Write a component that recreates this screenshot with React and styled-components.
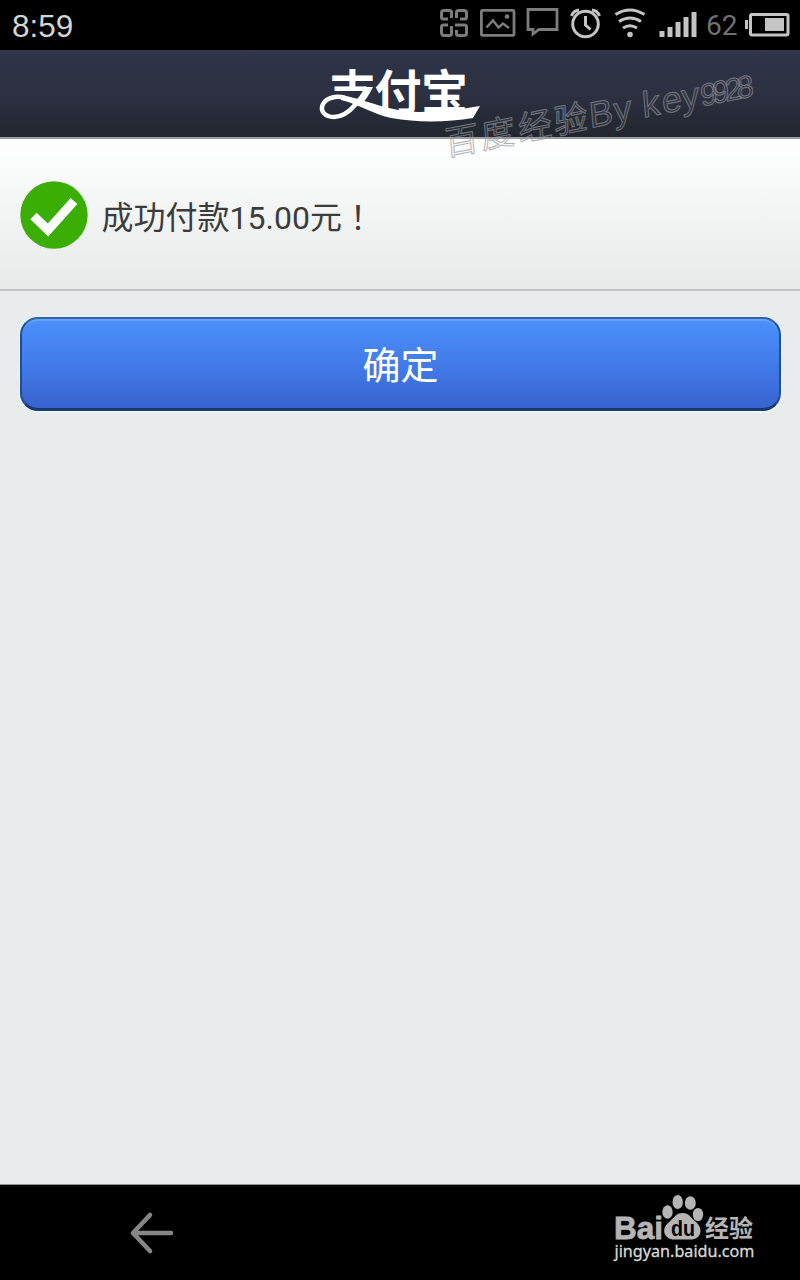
import React from 'react';
import styled, { createGlobalStyle } from 'styled-components';

const GlobalStyle = createGlobalStyle`
    * {
        box-sizing: border-box;
    }

    body {
        margin: 0;
        background-color: #e8ecec;
        font-family: Roboto, 'Noto Sans CJK SC', sans-serif;
    }
`;

// Styled components
const Screen = styled.div`
    width: 100%;
    height: 1280px;
    display: flex;
    flex-direction: column;
    background-color: #e8ecec;
    overflow: hidden;
`;

const StatusBar = styled.div`
    height: 50px;
    padding: 0 10px 0 12px;
    display: flex;
    justify-content: space-between;
    background-color: #000;
`;

const Clock = styled.div`
    padding-top: 1px;
    font-family: 'Liberation Sans', sans-serif;
    font-size: 31.5px;
    line-height: 50px;
    color: #d4d4d4;
`;

const StatusIcons = styled.div`
    display: flex;
    align-items: flex-start;
    padding-top: 6px;
`;

const StatusIcon = styled.svg`
    display: block;
    width: ${(props) => props.$width}px;
    height: 34px;
    margin-right: ${(props) => props.$gap || 0}px;
    color: ${(props) => (props.$bright ? '#c4c4c4' : '#7c7c7c')};
    fill: none;
    stroke: currentColor;
`;

const BatteryLevel = styled.div`
    width: 32px;
    margin-right: 7px;
    font-size: 28px;
    line-height: 39px;
    color: #707070;
`;

const Header = styled.header`
    position: relative;
    height: 89px;
    display: flex;
    justify-content: center;
    background: linear-gradient(#353a4c 0, #2f3348 6px, #2c3041 50%, #22262f 100%);
    border-bottom: 2px solid #9b9da2;
`;

const LogoMark = styled.svg`
    display: block;
    width: 164px;
    height: 60px;
    margin-top: 14px;
    overflow: visible;
    fill: #fff;
    font-family: 'Noto Sans CJK SC', sans-serif;
    font-size: 47px;
    font-weight: 700;
`;

const Watermark = styled.svg`
    position: absolute;
    top: 10px;
    left: 430px;
    width: 350px;
    height: 110px;
    overflow: visible;
    fill: rgba(190, 190, 190, 0.08);
    stroke: rgba(145, 147, 152, 0.7);
    stroke-width: 1;
    font-family: 'Liberation Sans', 'Noto Sans CJK SC', sans-serif;
    font-size: 34px;
    pointer-events: none;
`;

const Result = styled.section`
    height: 152px;
    padding: 2px 19.5px 0;
    display: flex;
    align-items: center;
    gap: 14px;
    background: linear-gradient(#fff 0%, #fbfcfc 15%, #e9eceb 90%, #e7ebea 100%);
    border-bottom: 2px solid #bfc3c2;
`;

const CheckIcon = styled.svg`
    display: block;
    width: 68px;
    height: 68px;
`;

const ResultText = styled.p`
    margin: 2px 0 0;
    font-size: 32px;
    line-height: 40px;
    color: #3c3c3c;
`;

// full-width punctuation that sits in the middle of its cell
const Mark = styled.span`
    font-family: 'Noto Sans CJK TC', sans-serif;
`;

const Actions = styled.main`
    flex: 1;
    padding: 26px 19px 0 20px;
`;

const ConfirmButton = styled.button`
    display: block;
    width: 100%;
    height: 94px;
    padding: 0 0 2px;
    border: 2px solid #1d4f93;
    border-top-color: #2c64ae;
    border-bottom: 3px solid #153b74;
    border-radius: 18px;
    background: linear-gradient(#4b90fb 0%, #427ce9 50%, #3962cf 100%);
    box-shadow: inset 0 3px 1px -1px #6ba5f5, 0 1px 2px #f8ffff;
    font-family: 'Noto Sans CJK SC', sans-serif;
    font-size: 38px;
    color: #fff;
`;

const NavBar = styled.nav`
    height: 96px;
    padding: 0 43px 0 128px;
    display: flex;
    justify-content: space-between;
    background-color: #000;
    border-top: 1px solid #8c8f8f;
`;

const BackIcon = styled.svg`
    display: block;
    width: 48px;
    height: 48px;
    margin-top: 24px;
    fill: none;
    stroke: #868686;
    stroke-width: 4.6;
    stroke-linecap: round;
    stroke-linejoin: round;
`;

const BaiduMark = styled.svg`
    display: block;
    width: 146px;
    height: 72px;
    margin-top: 7px;
    overflow: visible;
    fill: #b5b5b5;
    font-family: 'Liberation Sans', 'Noto Sans CJK SC', sans-serif;
    font-weight: 700;
`;

function StatusArea() {
    return (
        <StatusBar>
            <Clock>8:59</Clock>
            <StatusIcons>
                <StatusIcon $width={30} $gap={11} viewBox="0 0 30 34" strokeWidth="3">
                    <path d="M9 13H4.5Q2.5 13 2.5 11V7Q2.5 4.5 5 4.5H10.5Q12.5 4.5 12.5 6.5V12" />
                    <path d="M21 13H25.5Q27.5 13 27.5 11V7Q27.5 4.5 25 4.5H19.5Q17.5 4.5 17.5 6.5V12" />
                    <path d="M9 19H4.5Q2.5 19 2.5 21V26Q2.5 29.5 5 29.5H10.5Q12.5 29.5 12.5 27.5V20" />
                    <path d="M16 19H25.5Q27.5 19 27.5 21V27.5Q27.5 29.5 25 29.5H19.5Q17.5 29.5 17.5 27.5V24" />
                </StatusIcon>
                <StatusIcon $width={36} $gap={10} viewBox="0 0 36 34" strokeWidth="2.8">
                    <rect x="1.4" y="4.4" width="32.6" height="25" rx="1" />
                    <path d="M6.5 21.5L13 14.5L18.5 21.5L23 17.5L29 22" strokeWidth="2.5" />
                    <circle cx="27" cy="10.5" r="2.3" fill="currentColor" stroke="none" />
                </StatusIcon>
                <StatusIcon $width={34} $gap={10} viewBox="0 0 34 34" strokeWidth="2.8">
                    <path d="M2 3.5H31V23.5H13L7 28V23.5H2Z" />
                </StatusIcon>
                <StatusIcon $width={32} $gap={12} $bright viewBox="0 0 32 34" strokeWidth="3">
                    <circle cx="15.5" cy="18" r="12.8" />
                    <path d="M15.5 10V19L20.5 23.5" />
                    <path d="M1.5 10Q3.5 4.5 9 4M29.5 10Q27.5 4.5 22 4" />
                </StatusIcon>
                <StatusIcon $width={32} $gap={13} $bright viewBox="0 0 32 34" strokeWidth="3">
                    <path d="M1.5 8.5Q16 -.5 30.5 8.5M5 15.5Q16 8.5 27 15.5M9 22Q16 17.5 23 22" />
                    <circle cx="16" cy="28.5" r="2.8" fill="currentColor" stroke="none" />
                </StatusIcon>
                <StatusIcon $width={38} $gap={9} $bright viewBox="0 0 38 34" strokeWidth="5">
                    <path d="M3 31V25M11 31V21M19 31V16M27 31V11M35 31V6" />
                </StatusIcon>
                <BatteryLevel>62</BatteryLevel>
                <StatusIcon $width={45} $bright viewBox="0 0 45 34" strokeWidth="3">
                    <rect x="5.5" y="8.5" width="37.5" height="20.5" rx="1.5" />
                    <path d="M20 12H39V25H20ZM0 14H3V23H0Z" fill="currentColor" stroke="none" />
                </StatusIcon>
            </StatusIcons>
        </StatusBar>
    );
}

function AlipayLogo() {
    return (
        <LogoMark viewBox="318 64 164 60" role="img" aria-label="支付宝">
            <defs>
                <clipPath id="lettering">
                    <path d="M318 60H484V114H375V91H318Z" />
                </clipPath>
            </defs>
            <text x="329 374.5 421" y="109" clipPath="url(#lettering)">
                支付宝
            </text>
            {/* ribbon that loops under the first character */}
            <path
                d="M345 98C337 95.500 327 97 323 104C319.500 111 325 117 334 117C343 117 350 111 356 104"
                fill="none"
                stroke="#fff"
                strokeWidth="4.5"
            />
            <path d="M365 87H373C369 95 365 101 360 106L352 104C358 99 362 93 365 87Z" />
            <path d="M342 95C371 101 386 111 419 112C443 112 462 109 480 106L473 118C448 122 419 123 391 118C372 114 359 104 341 100Z" />
        </LogoMark>
    );
}

function BaiduLogo() {
    return (
        <BaiduMark viewBox="611 1192 146 72">
            <text
                x="614"
                y="1239"
                fontSize="32"
                stroke="#b5b5b5"
                strokeWidth="0.8"
                textLength="49"
                lengthAdjust="spacingAndGlyphs"
            >
                Bai
            </text>
            <ellipse cx="667.5" cy="1212" rx="5.2" ry="6.8" />
            <ellipse cx="677.7" cy="1202" rx="5.2" ry="7" />
            <ellipse cx="690.3" cy="1203" rx="5.5" ry="6.8" />
            <ellipse cx="698" cy="1214.5" rx="5.2" ry="6.6" />
            <path d="M682.5 1213C689 1213 691 1218 696 1222C704 1229 701 1240 690 1239.5L675 1239.5C664 1240 661 1229 668 1223C674 1218 676 1213 682.5 1213Z" />
            <text x="671" y="1236" fontSize="22" fill="#000" textLength="24" lengthAdjust="spacingAndGlyphs">
                du
            </text>
            <text x="705" y="1236.5" fontSize="24">
                经验
            </text>
            <text
                x="614.5"
                y="1257"
                fontFamily="'Noto Sans', sans-serif"
                fontSize="17"
                fontWeight="400"
                fill="#d8d8d8"
                stroke="#d8d8d8"
                strokeWidth="0.3"
                textLength="140"
                lengthAdjust="spacingAndGlyphs"
            >
                jingyan.baidu.com
            </text>
        </BaiduMark>
    );
}

function App() {
    return (
        <>
            <GlobalStyle />
            <Screen>
                <StatusArea />
                <Header>
                    <AlipayLogo />
                    <Watermark viewBox="430 60 350 110">
                        <text transform="translate(446 156) rotate(-11) skewX(-6)" y="0">
                            <tspan x="0 37 75 111">百度经验</tspan>
                            <tspan x="147 172 190 201 221 241" fontSize="36">
                                By key
                            </tspan>
                            <tspan x="260 272 285 297" fontSize="31">
                                9928
                            </tspan>
                        </text>
                    </Watermark>
                </Header>
                <Result>
                    <CheckIcon viewBox="0 0 68 68">
                        <circle cx="34" cy="34" r="33.7" fill="#3aae04" />
                        <path d="M13.5 35L28 49L54 20" fill="none" stroke="#fff" strokeWidth="9" />
                    </CheckIcon>
                    <ResultText>
                        成功付款15.00元<Mark>！</Mark>
                    </ResultText>
                </Result>
                <Actions>
                    <ConfirmButton>确定</ConfirmButton>
                </Actions>
                <NavBar>
                    <BackIcon viewBox="0 0 48 48">
                        <path d="M43 24H5M22 6L5 24L22 42" />
                    </BackIcon>
                    <BaiduLogo />
                </NavBar>
            </Screen>
        </>
    );
}

export default App;
